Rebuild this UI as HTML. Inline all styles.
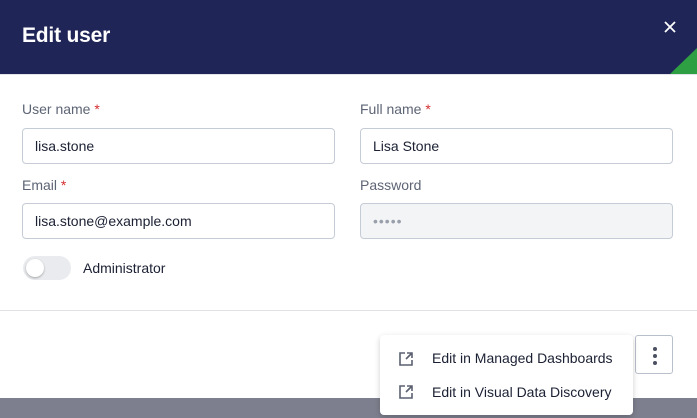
<!DOCTYPE html>
<html><head><style>
*{box-sizing:border-box;margin:0;padding:0}
body{width:697px;height:418px;overflow:hidden;background:#7d7f8e;font-family:"Liberation Sans",sans-serif;position:relative}
.hdr{position:absolute;left:0;top:0;width:697px;height:74px;background:#1f2556;overflow:hidden}
.hdr h1{position:absolute;left:22px;top:24px;color:#fff;font-size:21px;font-weight:bold;letter-spacing:-0.2px}
.x{position:absolute;left:664px;top:21px}
.body{position:absolute;left:0;top:74px;width:697px;height:324px;background:#fff;border-top:1px solid #e3e4e8}
.lbl{position:absolute;font-size:14px;color:#5d6474}
.lbl b{color:#d32f2f;font-weight:normal}
.inp{position:absolute;width:313px;height:36px;border:1px solid #c6ccd6;border-radius:4px;font-size:14px;color:#1b2033;padding:9px 0 0 12px}
.dis{background:#f3f4f6;color:#9aa0ab;letter-spacing:1px}
.tog{position:absolute;left:23px;top:256px;width:48px;height:24px;border-radius:12px;background:#e9ebee}
.tog i{position:absolute;left:3px;top:3px;width:18px;height:18px;border-radius:50%;background:#fff;box-shadow:0 1px 2px rgba(0,0,0,.3)}
.div{position:absolute;left:0;top:310px;width:697px;height:1px;background:#dfe1e5}
.kb{position:absolute;left:635px;top:335px;width:38px;height:39px;border:1px solid #b9bfcb;border-radius:3px;background:#fff}
.kb i{position:absolute;left:17px;width:4px;height:4px;border-radius:50%;background:#4a5060}
.menu{position:absolute;left:380px;top:335px;width:253px;height:80px;background:#fff;border-radius:4px;box-shadow:0 2px 6px rgba(0,0,0,.2)}
.mi{position:absolute;left:52px;font-size:14px;color:#1b2033}
.menu svg{position:absolute;left:18px}
</style></head><body>
<div class="hdr"><h1>Edit user</h1>
<svg class="x" width="12" height="12" viewBox="0 0 12 12" stroke="#fff" stroke-width="1.8"><path d="M1 1L11 11M11 1L1 11"/></svg>
<svg style="position:absolute;left:670px;top:48px" width="27" height="26"><polygon points="0,26 27,0 27,26" fill="#2ea043"/></svg></div>
<div class="body"></div>
<div class="lbl" style="left:22px;top:101px">User name <b>*</b></div>
<div class="lbl" style="left:360px;top:101px">Full name <b>*</b></div>
<div class="inp" style="left:22px;top:128px">lisa.stone</div>
<div class="inp" style="left:360px;top:128px">Lisa Stone</div>
<div class="lbl" style="left:22px;top:177px">Email <b>*</b></div>
<div class="lbl" style="left:360px;top:177px">Password</div>
<div class="inp" style="left:22px;top:203px">lisa.stone@example.com</div>
<div class="inp dis" style="left:360px;top:203px">•••••</div>
<div class="tog"><i></i></div>
<div class="lbl" style="left:83px;top:260px;color:#1b2033">Administrator</div>
<div class="div"></div>
<div class="kb"><i style="top:11px"></i><i style="top:18px"></i><i style="top:25px"></i></div>
<div class="menu">
<svg style="top:16px" width="16" height="16" viewBox="0 0 16 16" fill="none" stroke="#5a6070" stroke-width="1.6"><path d="M7 2H2v12h12V9"/><path d="M9 2h5v5M14 2L8 8"/></svg>
<div class="mi" style="top:15px">Edit in Managed Dashboards</div>
<svg style="top:49px" width="16" height="16" viewBox="0 0 16 16" fill="none" stroke="#5a6070" stroke-width="1.6"><path d="M7 2H2v12h12V9"/><path d="M9 2h5v5M14 2L8 8"/></svg>
<div class="mi" style="top:49px">Edit in Visual Data Discovery</div>
</div>
</body></html>
